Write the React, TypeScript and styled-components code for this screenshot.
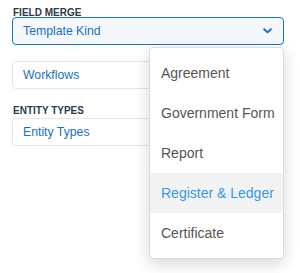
import * as React from 'react';
import styled, { createGlobalStyle } from 'styled-components';

const Global = createGlobalStyle`
    html, body {
        margin: 0;
        padding: 0;
        background: #fff;
        font-family: "Liberation Sans", Arial, sans-serif;
    }
`;

const Page = styled.div`
    width: 300px;
    height: 273px;
    box-sizing: border-box;
    padding: 8px 16px 0 12px;
    display: flex;
    flex-direction: column;
`;

const Label = styled.div<{ $top?: number }>`
    font-size: 10px;
    line-height: 9px;
    font-weight: 700;
    color: #2e3a4c;
    text-transform: uppercase;
    margin-top: ${p => p.$top || 0}px;
    margin-bottom: 0;
    padding-left: 1px;
`;

const SelectWrap = styled.div`
    position: relative;
    margin-top: 0;
`;

const Select = styled.div`
    height: 28px;
    box-sizing: border-box;
    border: 1px solid #1872d0;
    border-radius: 4px;
    background: #f5f8fb;
    display: flex;
    align-items: center;
    justify-content: space-between;
    padding: 0 11px 0 10px;
    color: #1a70c6;
    font-size: 12.25px;
`;

const Box = styled.div<{ $top?: number }>`
    height: 28px;
    box-sizing: border-box;
    border: 1px solid #e6e6e6;
    border-radius: 4px;
    background: #fff;
    display: flex;
    align-items: center;
    padding: 0 10px;
    color: #1a70c6;
    font-size: 12.25px;
    margin-top: ${p => p.$top || 0}px;
`;

const Menu = styled.ul`
    position: absolute;
    right: 0;
    top: calc(100% + 2px);
    width: 135px;
    box-sizing: border-box;
    margin: 0;
    padding: 5px 0;
    list-style: none;
    background: #fff;
    border: 1px solid #dcdcdc;
    border-radius: 4px;
    box-shadow: 0 5px 16px rgba(0, 0, 0, 0.16);
    z-index: 2;
`;

const Item = styled.li<{ $active?: boolean }>`
    height: 40px;
    display: flex;
    align-items: center;
    padding: 0 11px;
    font-size: 14px;
    color: ${p => (p.$active ? '#3399e8' : '#555')};
    background: ${p => (p.$active ? '#f3f3f3' : 'transparent')};
    white-space: nowrap;
`;

const Chevron = () => (
    <svg width="9" height="6" viewBox="0 0 9 6" fill="none">
        <path d="M1.2 1.2 L4.5 4.4 L7.8 1.2" stroke="#1a70c6" strokeWidth="2" strokeLinecap="round" strokeLinejoin="round" />
    </svg>
);

const options = ['Agreement', 'Government Form', 'Report', 'Register & Ledger', 'Certificate'];

export default function App() {
    return (
        <Page>
            <Global />
            <Label>Field Merge</Label>
            <SelectWrap>
                <Select>
                    <span>Template Kind</span>
                    <Chevron />
                </Select>
                <Menu>
                    {options.map(o => (
                        <Item key={o} $active={o === 'Register & Ledger'}>{o}</Item>
                    ))}
                </Menu>
            </SelectWrap>
            <Box $top={16}>Workflows</Box>
            <Label $top={17}>Entity Types</Label>
            <Box $top={3}>Entity Types</Box>
        </Page>
    );
}
